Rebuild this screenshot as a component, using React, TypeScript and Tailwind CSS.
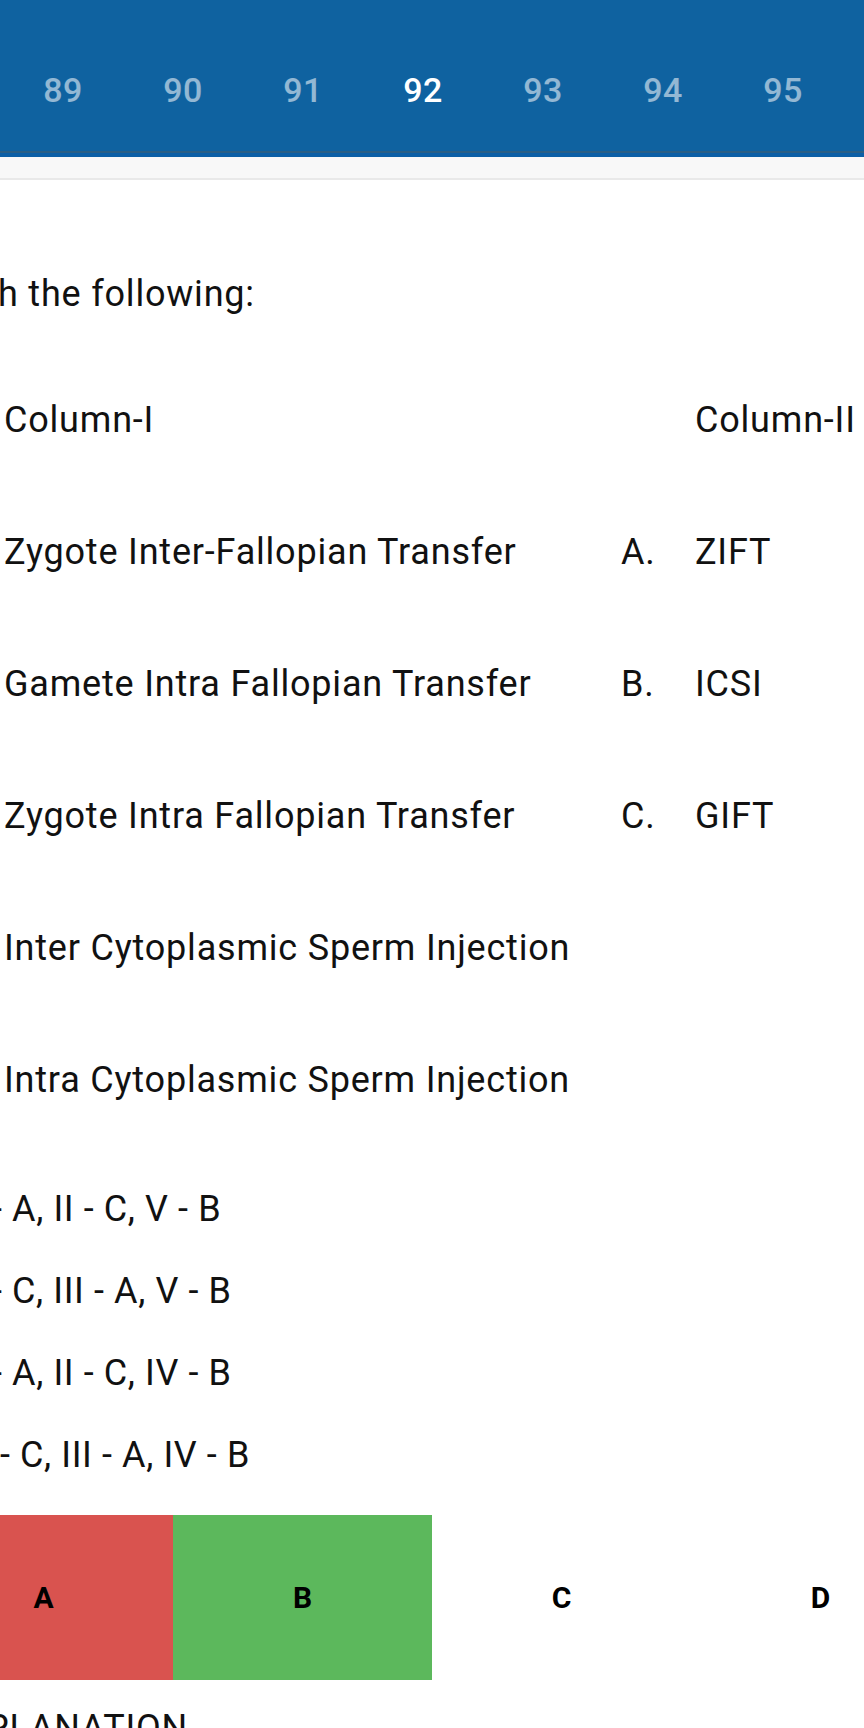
import React from 'react'

const tabs = [89, 90, 91, 92, 93, 94, 95]

const rows = [
  { left: 'Zygote Inter-Fallopian Transfer', key: 'A.', right: 'ZIFT' },
  { left: 'Gamete Intra Fallopian Transfer', key: 'B.', right: 'ICSI' },
  { left: 'Zygote Intra Fallopian Transfer', key: 'C.', right: 'GIFT' },
  { left: 'Inter Cytoplasmic Sperm Injection', key: '', right: '' },
  { left: 'Intra Cytoplasmic Sperm Injection', key: '', right: '' },
]

const options = [
  { text: '- A, II - C, V - B', shift: 'ml-[-8px]' },
  { text: '- C, III - A, V - B', shift: 'ml-[-8px]' },
  { text: '- A, II - C, IV - B', shift: 'ml-[-8px]' },
  { text: '- C, III - A, IV - B', shift: 'ml-[0px]' },
]

const answers = [
  { label: 'A', bg: 'bg-[#d9534f]' },
  { label: 'B', bg: 'bg-[#5cb85c]' },
  { label: 'C', bg: 'bg-white' },
  { label: 'D', bg: 'bg-white' },
]

export default function App() {
  const selected = 92

  return (
    <div className="w-[864px] h-[1728px] overflow-hidden bg-white text-[#111] font-['Roboto','Liberation_Sans',sans-serif]">
      {/* question number tabs */}
      <div className="bg-[#0f62a0]">
        <div className="h-[151px] pt-[30px] pl-[3px] flex items-center">
          {tabs.map(n => (
            <div
              key={n}
              className={`w-[120px] shrink-0 text-center text-[34px] font-medium tracking-[0.5px] ${
                n === selected ? 'text-white' : 'text-white/55'
              }`}
            >
              {n}
            </div>
          ))}
        </div>
        <div className="h-[2px] bg-[#2b5f85]" />
        <div className="h-[4px] bg-[#0c5fa6]" />
      </div>
      <div className="h-[23px] bg-[#f8f8f8] border-b-2 border-[#e9e9e9]" />

      {/* question */}
      <div className="text-[36px] leading-[48px] tracking-[0.8px] whitespace-nowrap">
        <div className="pt-[90px] pb-[36px] ml-[-2px]">h the following:</div>

        <div className="flex h-[132px] items-center">
          <div className="w-[621px] shrink-0 pl-[4px]">Column-I</div>
          <div className="w-[74px] shrink-0" />
          <div>Column-II</div>
        </div>
        {rows.map((r, i) => (
          <div key={i} className="flex h-[132px] items-center">
            <div className="w-[621px] shrink-0 pl-[4px]">{r.left}</div>
            <div className="w-[74px] shrink-0">{r.key}</div>
            <div>{r.right}</div>
          </div>
        ))}

        <div className="mt-[22px] tracking-[0.6px]">
          {options.map((o, i) => (
            <div key={i} className="h-[82px] flex items-center">
              <div className={o.shift}>{o.text}</div>
            </div>
          ))}
        </div>
      </div>

      {/* answer choices */}
      <div className="mt-[19px] ml-[-86px] flex w-[1036px] h-[165px]">
        {answers.map(a => (
          <div
            key={a.label}
            className={`w-[259px] shrink-0 flex items-center justify-center text-[30px] font-bold text-black ${a.bg}`}
          >
            {a.label}
          </div>
        ))}
      </div>

      <div className="mt-[24px] ml-[-14px] text-[36px] leading-[48px] tracking-[0.8px] whitespace-nowrap">PLANATION</div>
    </div>
  )
}
